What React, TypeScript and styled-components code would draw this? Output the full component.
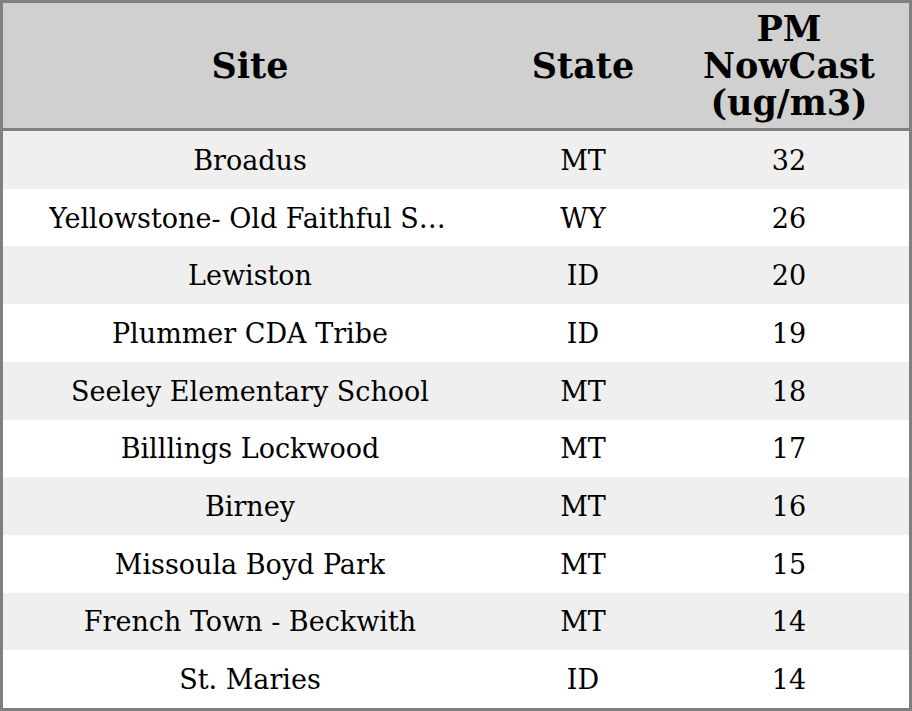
import React from "react";
import styled, { createGlobalStyle } from "styled-components";

const Global = createGlobalStyle`
  html, body { margin: 0; padding: 0; background: #ffffff; }
  body { font-family: "DejaVu Serif", serif; }
`;

const Table = styled.div`
  box-sizing: border-box;
  width: 912px;
  height: 711px;
  border: 3px solid #808080;
  display: flex;
  flex-direction: column;
  font-family: "DejaVu Serif", serif;
  color: #000;
`;

const HeaderRow = styled.div`
  display: grid;
  grid-template-columns: 494px 172px 1fr;
  height: 125px;
  flex: none;
  background: #d0d0d0;
  border-bottom: 3px solid #808080;
`;

const HeadCell = styled.div`
  display: flex;
  align-items: center;
  justify-content: center;
  text-align: center;
  font-weight: bold;
  font-size: 35px;
  line-height: 37px;
`;

const Row = styled.div<{ $alt: boolean }>`
  display: grid;
  grid-template-columns: 494px 172px 1fr;
  flex: 1 1 0;
  min-height: 0;
  background: ${(p) => (p.$alt ? "#efefef" : "#ffffff")};
`;

const Cell = styled.div`
  display: flex;
  align-items: center;
  justify-content: center;
  font-size: 27px;
  min-width: 0;
  padding-top: 1px;
`;

const SiteText = styled.span`
  display: block;
  max-width: 402px;
  white-space: nowrap;
  overflow: hidden;
  text-overflow: ellipsis;
  text-align: center;
`;

const rows: [string, string, number][] = [
  ["Broadus", "MT", 32],
  ["Yellowstone- Old Faithful Snow Lodge", "WY", 26],
  ["Lewiston", "ID", 20],
  ["Plummer CDA Tribe", "ID", 19],
  ["Seeley Elementary School", "MT", 18],
  ["Billlings Lockwood", "MT", 17],
  ["Birney", "MT", 16],
  ["Missoula Boyd Park", "MT", 15],
  ["French Town - Beckwith", "MT", 14],
  ["St. Maries", "ID", 14],
];

export default function App() {
  return (
    <>
      <Global />
      <Table>
        <HeaderRow>
          <HeadCell>Site</HeadCell>
          <HeadCell>State</HeadCell>
          <HeadCell>
            PM
            <br />
            NowCast
            <br />
            (ug/m3)
          </HeadCell>
        </HeaderRow>
        {rows.map(([site, st, v], i) => (
          <Row key={i} $alt={i % 2 === 0}>
            <Cell>
              <SiteText>{site}</SiteText>
            </Cell>
            <Cell>{st}</Cell>
            <Cell>{v}</Cell>
          </Row>
        ))}
      </Table>
    </>
  );
}
